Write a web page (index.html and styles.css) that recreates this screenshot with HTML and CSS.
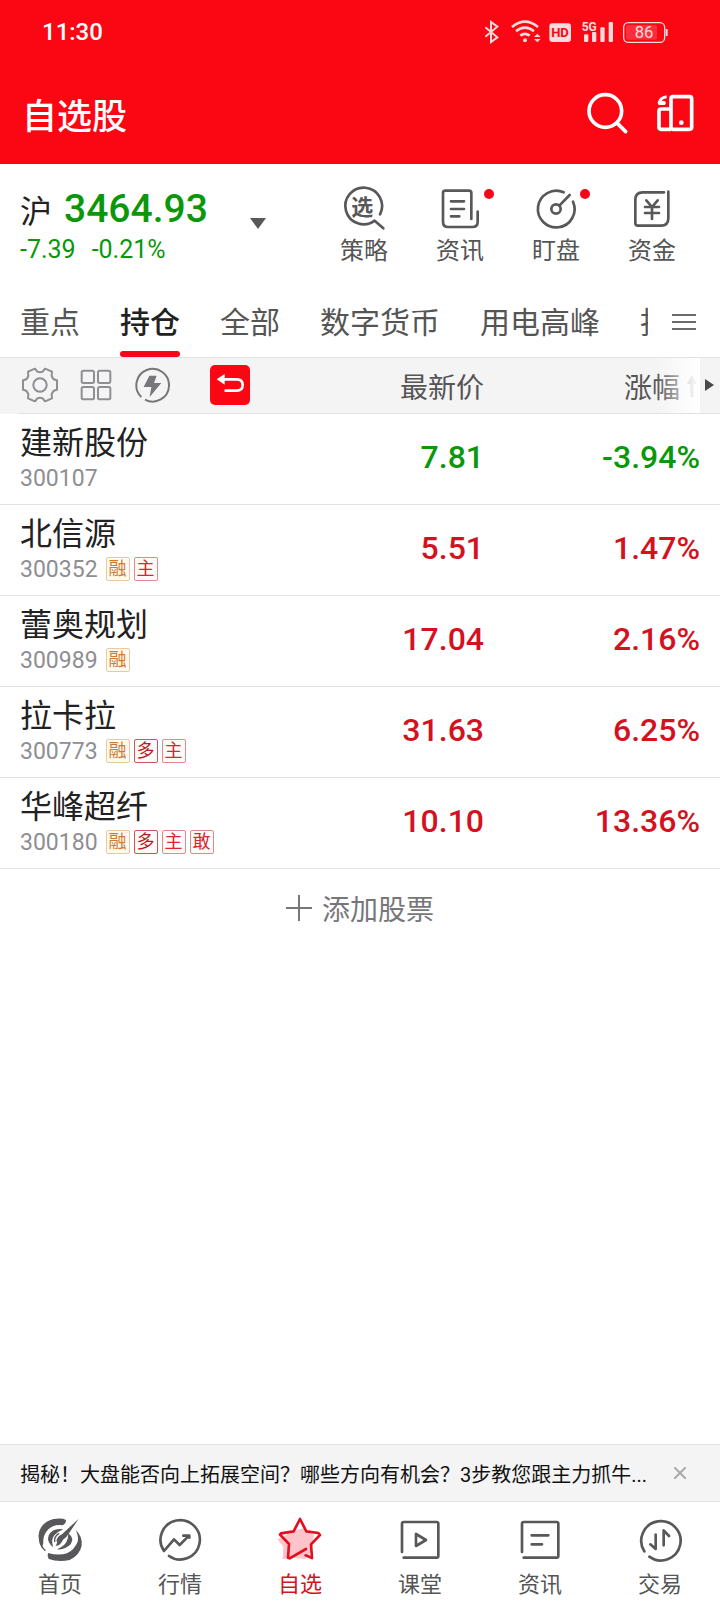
FILE: index.html
```html
<!DOCTYPE html>
<html lang="zh-CN">
<head>
    <meta charset="UTF-8">
    <meta name="viewport" content="width=device-width, initial-scale=1.0">
    <title>自选股</title>
    <link rel="stylesheet" href="styles.css">
</head>
<body>
    <header class="header">
        <div class="status">
            <span class="time">11:30</span>
            <div class="status-icons">
                <svg width="20" height="32" viewBox="69 48 60 96" fill="none" stroke="#fff" stroke-width="6"><path d="M76 82l36 30-19 14V66l19 14-36 30"/></svg>
                <svg width="30" height="32" viewBox="153 48 90 96" fill="none" stroke="#fff" stroke-width="8"><path d="M156 81q39-32 78 0M168 94q27-22 54 0M181 107q14-11 28 0"/><circle cx="195" cy="121" r="6" fill="#fff" stroke="none"/><path d="M222 111l10-10 10 10zM222 117l10 10 10-10z" fill="#fff" stroke="none"/></svg>
                <svg width="25" height="32" viewBox="267 48 75 96"><rect x="268" y="70" width="65" height="56" rx="9" fill="#fff"/><text x="300" y="112" class="hd-text">HD</text></svg>
                <svg width="32" height="32" viewBox="366 48 96 96" fill="#fff"><text x="365" y="92" class="net-text">5G</text><rect x="372" y="103" width="13" height="23" rx="3"/><rect x="396" y="96" width="13" height="30" rx="3"/><rect x="421" y="82" width="13" height="44" rx="3"/><rect x="446" y="66" width="13" height="60" rx="3"/></svg>
                <svg width="46" height="32" viewBox="486 48 138 96"><rect x="491" y="68" width="123" height="59" rx="14" fill="none" stroke="#fff" stroke-width="4"/><rect x="498" y="75" width="93" height="44" rx="6" fill="#fff" opacity=".2"/><path d="M620 87v21" stroke="#fff" stroke-width="6"/><text x="552" y="114" class="battery-text">86</text></svg>
            </div>
        </div>
        <div class="title-bar">
            <h1>自选股</h1>
            <div class="title-actions">
                <button type="button" aria-label="搜索">
                    <svg width="44" height="44" viewBox="380 276 132 132" fill="none" stroke="#fff" stroke-width="11" stroke-linecap="round"><circle cx="438" cy="336" r="49"/><path d="M474 373l25 25"/></svg>
                </button>
                <button type="button" aria-label="设备">
                    <svg width="44" height="44" viewBox="584 276 132 132" fill="none" stroke="#fff" stroke-width="11" stroke-linejoin="round"><rect x="635" y="293" width="62" height="98" rx="6"/><path d="M635 330h-30q-6 0-6 6v49q0 6 6 6h30"/><path d="M622 293q-20 3-21 18" stroke-width="9"/><path d="M596 306h18q6 0 5 7l-2 5h-16q-6 0-6-6z" fill="#fff" stroke="none"/><circle cx="666" cy="371" r="7" fill="#fff" stroke="none"/></svg>
                </button>
            </div>
        </div>
    </header>

    <section class="summary">
        <div class="index">
            <div class="index-main"><span class="market">沪</span><span class="index-value">3464.93</span></div>
            <div class="index-change"><span>-7.39</span><span>-0.21%</span></div>
        </div>
        <button type="button" class="caret" aria-label="切换指数">
            <svg width="16" height="11" viewBox="0 0 16 11"><path d="M0 0h16L8 11z" fill="#58585a"/></svg>
        </button>
        <div class="tools">
            <a href="#">
                <span class="tool-icon"><svg viewBox="60 42 144 144"><path d="M180 130A55 55 0 1 0 164 149l26 23"/><text x="127" y="131" class="pick-text">选</text></svg></span>
                策略
            </a>
            <a href="#">
                <span class="tool-icon"><svg viewBox="348 42 144 144"><path d="M454 144V66q0-7-7-7h-71q-7 0-7 7v86q0 16 16 16h72q16 0 16-16v-30M393 91h39M393 114h39M393 136h25"/></svg><i class="dot"></i></span>
                资讯
            </a>
            <a href="#">
                <span class="tool-icon"><svg viewBox="636 42 144 144"><path d="M731 64a55 55 0 1 0 28 28M718 104l31-32"/><circle cx="708" cy="114" r="14"/></svg><i class="dot"></i></span>
                盯盘
            </a>
            <a href="#">
                <span class="tool-icon"><svg viewBox="924 42 144 144"><path d="M1032 64h-64q-22 0-22 22v70q0 8 8 8h69q22 0 22-22V62M979 88l17 20 17-20M996 108v36M975 108h42M975 126h42"/></svg></span>
                资金
            </a>
        </div>
    </section>

    <nav class="tabs">
        <div class="tab-list">
            <a href="#">重点</a>
            <a href="#" class="active">持仓</a>
            <a href="#">全部</a>
            <a href="#">数字货币</a>
            <a href="#">用电高峰</a>
            <a href="#">抄底</a>
        </div>
        <button type="button" class="menu" aria-label="更多分组">
            <svg width="24" height="18" viewBox="0 0 24 18" stroke="#6b6b6d" stroke-width="2"><path d="M0 2h24M0 9h24M0 16h24"/></svg>
        </button>
    </nav>

    <main>
        <table class="stocks">
            <thead>
                <tr>
                    <th class="col-name">
                        <div class="toolbar">
                            <button type="button" aria-label="设置"><svg viewBox="-54 -54 108 108"><path d="M-15-49l7 9q8 3 16 0l7-9 21 9-1 12q3 11 12 13l4 1v28l-4 1q-9 2-12 13l1 12-21 9-7-9q-8-3-16 0l-7 9-21-9 1-12q-3-11-12-13l-4-1v-28l4-1q9-2 12-13l-1-12z"/><circle r="20"/></svg></button>
                            <button type="button" aria-label="宫格"><svg viewBox="234 231 108 108"><rect x="245" y="242" width="37" height="37" rx="5"/><rect x="294" y="242" width="37" height="37" rx="5"/><rect x="245" y="291" width="37" height="37" rx="5"/><rect x="294" y="291" width="37" height="37" rx="5"/></svg></button>
                            <button type="button" aria-label="异动"><svg class="bolt" viewBox="405 231 108 108"><path d="M427 321a49 49 0 1 1 11 8"/><path d="M451 257h22l-8 22h22l-35 42 5-30h-23z" class="solid"/></svg></button>
                            <button type="button" class="back" aria-label="返回"><svg viewBox="630 225 120 120"><path d="M668 268h42q18 0 18 17t-18 17h-33"/><path d="M650 268l24-16v32z" class="solid"/></svg></button>
                        </div>
                    </th>
                    <th class="col-price">最新价</th>
                    <th class="col-change">涨幅<svg class="sort" width="10" height="22" viewBox="0 0 10 22"><path d="M5 22V8" stroke="#999" stroke-width="3"/><path d="M0 9l5-9 5 9z" fill="#999"/></svg><span class="fade"></span><svg class="next" width="9" height="12" viewBox="0 0 9 12"><path d="M0 0l9 6-9 6z" fill="#4a4a4a"/></svg></th>
                </tr>
            </thead>
            <tbody>
                <tr class="down">
                    <td><div class="name">建新股份</div><div class="code">300107</div></td>
                    <td>7.81</td>
                    <td>-3.94%</td>
                </tr>
                <tr class="up">
                    <td><div class="name">北信源</div><div class="code">300352<span class="tags"><b class="rong">融</b><b>主</b></span></div></td>
                    <td>5.51</td>
                    <td>1.47%</td>
                </tr>
                <tr class="up">
                    <td><div class="name">蕾奥规划</div><div class="code">300989<span class="tags"><b class="rong">融</b></span></div></td>
                    <td>17.04</td>
                    <td>2.16%</td>
                </tr>
                <tr class="up">
                    <td><div class="name">拉卡拉</div><div class="code">300773<span class="tags"><b class="rong">融</b><b class="duo">多</b><b>主</b></span></div></td>
                    <td>31.63</td>
                    <td>6.25%</td>
                </tr>
                <tr class="up">
                    <td><div class="name">华峰超纤</div><div class="code">300180<span class="tags"><b class="rong">融</b><b class="duo">多</b><b>主</b><b>敢</b></span></div></td>
                    <td>10.10</td>
                    <td>13.36%</td>
                </tr>
            </tbody>
        </table>
        <button type="button" class="add">
            <svg width="26" height="26" viewBox="0 0 26 26" stroke="#77777a" stroke-width="2"><path d="M13 0v26M0 13h26"/></svg>
            添加股票
        </button>
    </main>

    <aside class="notice">
        <a href="#">揭秘！大盘能否向上拓展空间？哪些方向有机会？3步教您跟主力抓牛...</a>
        <button type="button" aria-label="关闭">
            <svg width="12" height="12" viewBox="0 0 12 12" stroke="#aaa" stroke-width="2"><path d="M0 0l12 12M12 0L0 12"/></svg>
        </button>
    </aside>

    <nav class="bottom-nav">
        <a href="#">
            <!-- brush-stroke logo -->
            <svg viewBox="108 228 144 144"><g fill="#58585a" stroke="none"><path d="M126 325Q112 301 118 273Q128 245 160 237Q188 233 198 240Q198 251 188 256Q162 252 145 268Q128 286 130 308z"/><path d="M144 339Q176 348 201 340Q224 328 233 305Q237 290 227 270Q249 290 245 318Q238 347 209 360Q176 368 146 357Q141 349 144 339z"/><path d="M236 236L205 283Q199 294 189 299Q181 318 167 317Q174 306 169 303Q171 290 186 283z"/><path d="M190 268Q159 262 146 286Q139 306 160 322Q152 300 163 286Q173 275 190 268z"/><path d="M205 280Q224 295 212 313Q194 331 171 328Q194 318 200 304Q205 294 205 280z"/></g><path d="M118 285q-1 30 17 46M176 281q-14 9-12 24" stroke-width="4"/></svg>
            首页
        </a>
        <a href="#">
            <svg viewBox="468 228 144 144"><path d="M507 348a59 59 0 1 0-15-15l30-35 17 17 28-28M550 287h18v6"/></svg>
            行情
        </a>
        <a href="#" class="active">
            <svg viewBox="828 228 144 144"><path d="M872 274l-22 18-18 5 18 24-2 36 38-3 30 3 19-23 4-40 5-7-32-22z" class="shade"/><path d="M917 346l19 8-3-41 27-28-5-6-36-5-19-37-19 37-38 6-3 4 27 28-3 41 5 2 49-28"/></svg>
            自选
        </a>
        <a href="#">
            <svg viewBox="108 228 144 144"><path d="M126 336v-85q0-5 5-5h99q5 0 5 5v97q0 5-5 5H131M168 282v36l30-18z"/></svg>
            课堂
        </a>
        <a href="#">
            <svg viewBox="468 228 144 144"><path d="M486 336v-85q0-5 5-5h99q5 0 5 5v97q0 5-5 5H491M515 286h50M515 313h31"/></svg>
            资讯
        </a>
        <a href="#">
            <svg viewBox="828 228 144 144"><path d="M853 334a59 59 0 1 1 15 16M887 284v43l-16-14M911 316v-45l16 17"/></svg>
            交易
        </a>
    </nav>
</body>
</html>
```

FILE: styles.css
```css
/* General Styles */
* {
    box-sizing: border-box;
}
body {
    font-family: Roboto, "Noto Sans CJK SC", sans-serif;
    display: flex;
    flex-direction: column;
    min-height: 100vh;
    margin: 0;
    background-color: #fff;
    color: #222;
}
a {
    color: inherit;
    text-decoration: none;
}
button {
    display: flex;
    align-items: center;
    justify-content: center;
    padding: 0;
    border: 0;
    background: none;
    font: inherit;
    color: inherit;
}
svg {
    display: block;
}

/* Header */
.header {
    background-color: #fb0613;
    color: #fff;
}
.status {
    display: flex;
    align-items: center;
    justify-content: space-between;
    height: 64px;
    padding: 0 52px 0 42px;
}
.time {
    font-size: 24px;
    font-weight: 500;
}
.status-icons {
    display: flex;
    gap: 8px;
    opacity: 0.85;
}
.hd-text {
    font-size: 39px;
    font-weight: 700;
    fill: #fb0613;
    text-anchor: middle;
}
.net-text {
    font-size: 36px;
    font-weight: 700;
}
.battery-text {
    font-size: 50px;
    fill: #fff;
    text-anchor: middle;
}
.title-bar {
    display: flex;
    align-items: center;
    justify-content: space-between;
    height: 100px;
    padding: 0 22px 2px;
}
h1 {
    margin: 0;
    font-size: 35px;
    font-weight: 500;
}
.title-actions {
    display: flex;
    gap: 24px;
}

/* Index and shortcuts */
.summary {
    display: flex;
    align-items: center;
    height: 126px;
    padding: 0 20px;
}
.index {
    flex: 1;
}
.index-main {
    display: flex;
    align-items: center;
    gap: 12px;
    height: 46px;
}
.market {
    font-size: 32px;
}
.index-value {
    font-size: 39px;
    font-weight: 500;
    color: #0a980a;
}
.index-change {
    display: flex;
    gap: 16px;
    font-size: 25px;
    line-height: 36px;
    color: #0a980a;
}
.caret {
    width: 16px;
    margin: 0 50px 8px 0;
}
.tools {
    display: flex;
}
.tools a {
    display: flex;
    flex-direction: column;
    align-items: center;
    width: 96px;
    font-size: 24px;
    line-height: 36px;
    color: #555;
}
.tool-icon {
    position: relative;
    width: 48px;
    height: 48px;
}
.tool-icon svg {
    fill: none;
    stroke: #58585a;
    stroke-width: 8;
    stroke-linecap: round;
    stroke-linejoin: round;
}
.tool-icon .pick-text {
    font-size: 66px;
    font-weight: 700;
    fill: #58585a;
    stroke: none;
    text-anchor: middle;
}
.dot {
    position: absolute;
    top: 4px;
    left: 48px;
    width: 10px;
    height: 10px;
    border-radius: 50%;
    background-color: #f5071a;
}

/* Group tabs */
.tabs {
    display: flex;
    align-items: center;
    height: 68px;
    padding: 0 24px 0 20px;
    border-bottom: 1px solid #e2e2e2;
}
.tab-list {
    display: flex;
    flex: 1;
    gap: 40px;
    height: 67px;
    overflow: hidden;
    font-size: 30px;
    line-height: 66px;
    color: #555;
    white-space: nowrap;
}
.tab-list a {
    position: relative;
}
.tab-list .active {
    font-weight: 500;
    color: #222;
}
.tab-list .active::after {
    content: "";
    position: absolute;
    bottom: 0;
    left: 0;
    width: 100%;
    height: 6px;
    border-radius: 3px;
    background-color: #f5071a;
}
.menu {
    width: 48px;
    padding-bottom: 4px;
    justify-content: flex-end;
}

/* Stock table */
.stocks {
    width: 100%;
    table-layout: fixed;
    border-spacing: 0;
}
.stocks th {
    height: 56px;
    padding: 0;
    border-bottom: 1px solid #e2e2e2;
    background-color: #f4f4f4;
    font-size: 28px;
    font-weight: 400;
    color: #555;
    text-align: right;
}
.stocks .col-name {
    padding: 0 0 2px 22px;
    border-image: linear-gradient(to right, #f4f4f4 20px, #e2e2e2 20px) 1;
}
.col-price {
    width: 160px;
}
.stocks .col-change {
    position: relative;
    width: 236px;
    padding-right: 40px;
}
.toolbar {
    display: flex;
    align-items: center;
    gap: 20px;
}
.toolbar svg {
    width: 36px;
    height: 36px;
    fill: none;
    stroke: #8e8e93;
    stroke-width: 6;
    stroke-linejoin: round;
}
.toolbar .bolt {
    stroke: #77777a;
}
.toolbar .bolt .solid {
    fill: #77777a;
    stroke: none;
}
.toolbar .back {
    width: 40px;
    height: 40px;
    margin-left: 20px;
    border-radius: 5px;
    background-color: #fb0613;
}
.toolbar .back svg {
    width: 40px;
    height: 40px;
    stroke: #fff;
    stroke-width: 8;
    stroke-linecap: round;
}
.toolbar .back .solid {
    fill: #fff;
    stroke: none;
}
.sort {
    position: absolute;
    top: 17px;
    right: 23px;
}
.fade {
    position: absolute;
    top: 0;
    right: 20px;
    width: 44px;
    height: 55px;
    background: linear-gradient(to right, rgba(255, 255, 255, 0), #fff);
}
.next {
    position: absolute;
    top: 21px;
    right: 6px;
}
.stocks td {
    height: 91px;
    padding: 0 0 4px;
    border-bottom: 1px solid #e2e2e2;
    font-size: 32px;
    font-weight: 500;
    text-align: right;
}
.stocks td:first-child {
    padding-left: 20px;
    font-weight: 400;
    text-align: left;
}
.stocks td:last-child {
    padding-right: 20px;
}
.up {
    color: #d4121f;
}
.down {
    color: #0a980a;
}
.name {
    line-height: 43px;
    color: #222;
}
.code {
    display: flex;
    align-items: center;
    gap: 8px;
    height: 28px;
    font-size: 23px;
    color: #8e8e93;
}
.tags {
    display: flex;
    gap: 4px;
    padding-bottom: 2px;
}
.tags b {
    width: 24px;
    height: 24px;
    border: 1px solid #e08a8a;
    border-radius: 2px;
    background-color: #fffafa;
    font-size: 18px;
    font-weight: 400;
    line-height: 22px;
    text-align: center;
    color: #d8262c;
}
.tags .rong {
    border-color: #eac9a0;
    background-color: #fffaf0;
    color: #d07a30;
}
.tags .duo {
    border-color: #cc5555;
    color: #b81c22;
}
.add {
    gap: 10px;
    width: 100%;
    height: 78px;
    font-size: 28px;
    color: #77777a;
}

/* Notice strip */
.notice {
    display: flex;
    align-items: center;
    justify-content: space-between;
    height: 58px;
    margin-top: auto;
    padding: 0 34px 0 20px;
    border-top: 1px solid #e2e2e2;
    border-bottom: 1px solid #e2e2e2;
    background-color: #f4f4f4;
    font-size: 20px;
    color: #111;
    white-space: nowrap;
}

/* Bottom navigation */
.bottom-nav {
    display: flex;
    height: 110px;
    padding-top: 14px;
}
.bottom-nav a {
    display: flex;
    flex: 1;
    flex-direction: column;
    align-items: center;
    font-size: 22px;
    line-height: 42px;
    color: #555;
}
.bottom-nav svg {
    width: 48px;
    height: 48px;
    fill: none;
    stroke: #58585a;
    stroke-width: 8;
    stroke-linecap: round;
    stroke-linejoin: round;
}
.bottom-nav .active {
    color: #d4121f;
}
.bottom-nav .active svg {
    stroke: #e01020;
}
.bottom-nav .shade {
    fill: #ffc4ca;
    stroke: none;
}
```
